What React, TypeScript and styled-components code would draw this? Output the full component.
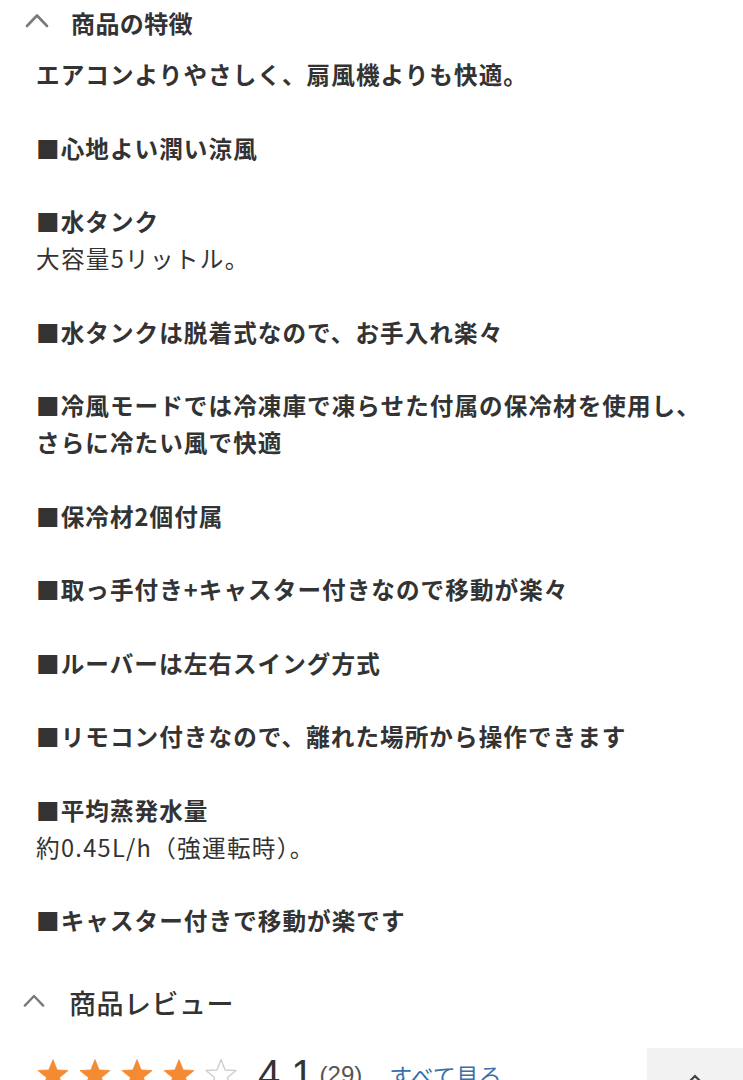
import React from "react";
import styled, { createGlobalStyle } from "styled-components";

const GlobalStyle = createGlobalStyle`
  html, body {
    margin: 0;
    padding: 0;
    background: #ffffff;
  }
  body {
    font-family: "Noto Sans CJK JP", "Noto Sans", sans-serif;
    color: #333333;
    overflow: hidden;
  }
`;

interface Feature {
  title: string;
  lines?: string[];
}

const features: Feature[] = [
  { title: "エアコンよりやさしく、扇風機よりも快適。" },
  { title: "■心地よい潤い涼風" },
  { title: "■水タンク", lines: ["大容量5リットル。"] },
  { title: "■水タンクは脱着式なので、お手入れ楽々" },
  { title: "■冷風モードでは冷凍庫で凍らせた付属の保冷材を使用し、さらに冷たい風で快適" },
  { title: "■保冷材2個付属" },
  { title: "■取っ手付き+キャスター付きなので移動が楽々" },
  { title: "■ルーバーは左右スイング方式" },
  { title: "■リモコン付きなので、離れた場所から操作できます" },
  { title: "■平均蒸発水量", lines: ["約0.45L/h（強運転時）。"] },
  { title: "■キャスター付きで移動が楽です" },
];

const Chevron = ({ size = 24 }: { size?: number }) => (
  <svg width={size} height={size} viewBox="0 0 24 24" fill="none">
    <path d="M2 17 L12 6.5 L22 17" stroke="#7a7a7a" strokeWidth="2.6" strokeLinecap="round" strokeLinejoin="round" />
  </svg>
);

const Star = ({ filled }: { filled: boolean }) => (
  <svg width="34" height="33" viewBox="0 0 24 23">
    <path
      d="M12 1 L14.9 8.3 L22.6 8.7 L16.6 13.6 L18.6 21.2 L12 16.9 L5.4 21.2 L7.4 13.6 L1.4 8.7 L9.1 8.3 Z"
      fill={filled ? "#f48a32" : "#ffffff"}
      stroke={filled ? "#f48a32" : "#cfcfcf"}
      strokeWidth={filled ? 0.6 : 1}
      strokeLinejoin="round"
    />
  </svg>
);

export default function App() {
  return (
    <Page>
      <GlobalStyle />
      <Section>
        <SectionHeader>
          <ChevronSlot>
            <Chevron />
          </ChevronSlot>
          <SectionTitle>商品の特徴</SectionTitle>
        </SectionHeader>
        <Body>
          {features.map((f, i) => (
            <Paragraph key={i}>
              <Strong>{f.title}</Strong>
              {f.lines?.map((l, j) => (
                <Plain key={j}>{l}</Plain>
              ))}
            </Paragraph>
          ))}
        </Body>
      </Section>
      <Section>
        <ReviewHeader>
          <ChevronSlot>
            <Chevron size={22} />
          </ChevronSlot>
          <ReviewTitle>商品レビュー</ReviewTitle>
        </ReviewHeader>
        <RatingRow>
          <Stars>
            {[0, 1, 2, 3, 4].map((i) => (
              <Star key={i} filled={i < 4} />
            ))}
          </Stars>
          <Score>4.1</Score>
          <Count>(29)</Count>
          <SeeAll href="#">すべて見る</SeeAll>
        </RatingRow>
      </Section>
      <ToTop>
        <svg width="18" height="18" viewBox="0 0 24 24" fill="none">
          <path d="M4 16 L12 8 L20 16" stroke="#444" strokeWidth="3" strokeLinecap="round" />
        </svg>
      </ToTop>
    </Page>
  );
}

const Page = styled.div`
  position: relative;
  width: 743px;
  height: 1080px;
  overflow: hidden;
`;

const Section = styled.section`
  display: flex;
  flex-direction: column;
`;

const SectionHeader = styled.div`
  display: flex;
  align-items: center;
  height: 44px;
  padding-left: 25px;
`;

const ChevronSlot = styled.span`
  display: flex;
  align-items: center;
  width: 46px;
  margin-top: -2px;
`;

const SectionTitle = styled.h2`
  margin: 0;
  font-size: 24px;
  font-weight: 600;
  color: #333;
  letter-spacing: 0.4px;
`;

const Body = styled.div`
  padding: 12px 36px 0 36px;
  font-size: 23.6px;
  line-height: 36.8px;
  letter-spacing: 1.05px;
`;

const Paragraph = styled.div`
  margin-bottom: 36.8px;
  &:last-child {
    margin-bottom: 0;
  }
`;

const Strong = styled.div`
  font-weight: 600;
  color: #333;
`;

const Plain = styled.div`
  font-weight: 400;
  color: #333;
  letter-spacing: 1.3px;
`;

const ReviewHeader = styled.div`
  display: flex;
  align-items: center;
  height: 44px;
  margin-top: 41px;
  padding-left: 23px;
`;

const ReviewTitle = styled.h2`
  margin: 0;
  font-size: 27px;
  font-weight: 500;
  color: #333;
  letter-spacing: 0.5px;
`;

const RatingRow = styled.div`
  display: flex;
  align-items: center;
  padding-left: 36px;
  margin-top: 28px;
`;

const Stars = styled.div`
  display: flex;
  gap: 8px;
  margin-right: 20px;
`;

const Score = styled.span`
  font-family: "Liberation Sans", Arial, sans-serif;
  font-size: 40px;
  color: #333;
  margin-right: 6px;
`;

const Count = styled.span`
  font-family: "Liberation Sans", Arial, sans-serif;
  font-size: 24px;
  color: #555;
  margin-right: 27px;
`;

const SeeAll = styled.a`
  font-size: 23px;
  color: #3b6fa8;
  text-decoration: none;
`;

const ToTop = styled.div`
  position: absolute;
  left: 647px;
  top: 1048px;
  width: 96px;
  height: 80px;
  background: #f2f2f2;
  display: flex;
  justify-content: center;
  padding-top: 22px;
  box-sizing: border-box;
`;
